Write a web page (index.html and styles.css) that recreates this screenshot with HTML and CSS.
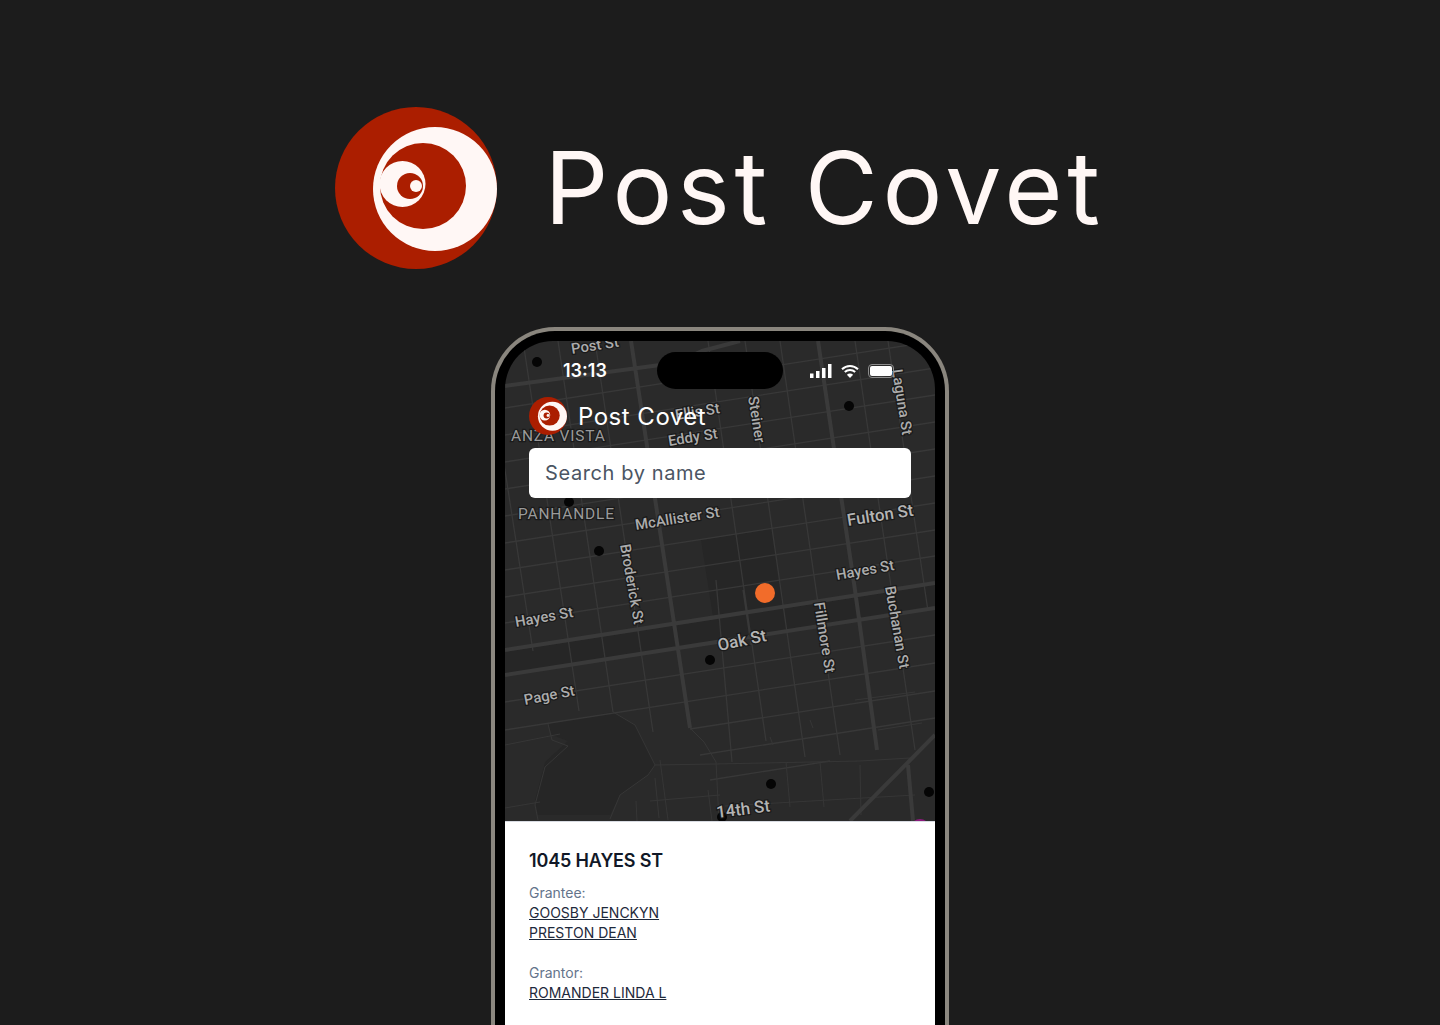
FILE: index.html
```html
<!DOCTYPE html>
<html lang="en">
<head>
<meta charset="utf-8">
<title>Post Covet</title>
<link rel="stylesheet" href="styles.css">
</head>
<body>
<svg class="defs" width="0" height="0" aria-hidden="true">
  <symbol id="logo" viewBox="335 107 162 162">
    <circle cx="416" cy="188" r="81" fill="#ab1e00"/>
    <circle cx="435" cy="189" r="62" fill="#fff7f5"/>
    <circle cx="423" cy="186" r="43" fill="#ab1e00"/>
    <circle cx="402.500" cy="184" r="23" fill="#fff7f5"/>
    <circle cx="410" cy="186" r="13" fill="#ab1e00"/>
    <circle cx="416" cy="186" r="6" fill="#fff7f5"/>
  </symbol>
</svg>
<main class="page">
  <header class="brand">
    <svg class="brand-logo"><use href="#logo"/></svg>
    <h1 class="brand-name">Post Covet</h1>
  </header>
  <section class="phone">
    <div class="screen">
      <div class="map-area">
        <svg class="map" viewBox="505 341 430 480">
          <rect x="505" y="341" width="430" height="480" fill="#2a2a2a"/>
          <path class="block" d="M701 540l71-11 13 83-71 11zM505 652l430-67 0 23-430 67zM548 724l65-12 22 13 20 40-7 10-28 20-10 20-72 0-3-15 10-38 23-21-16-6z"/>
          <path class="minor" d="M505 408l430-67M505 435l430-67M505 462l430-67M505 489l430-67M505 516l430-67M505 543l430-67M505 570l430-67M505 597l430-67M505 623l430-67M505 702l430-67M505 730l430-67M690 729l245-38M700 755l235-37M710 780l120-19"/>
          <path class="minor" d="M523 341l56 370M558 341l55 371M595 341l58 391M708 341l58 400M745 341l60 416M780 341l60 414M855 341l60 409M888 341l40 270M485 341l48 310M716 580l16 182M743 590l8 55"/>
          <path class="thin" d="M613 712l22 13 20 40-7 10-28 20-10 24M548 724l4 16 16 6-23 21-10 38 3 15M690 728l14 14 12 20 3 59M655 765l60-1 145-3 50-3M505 745l55-11M505 808l35-6M655 778l4 40M708 790l4 31M786 762l4 45M820 762l4 45M860 765l1 50M855 700l60-8M770 737l3 8M650 801l70-6M725 806l190-11M878 730l44-7M810 720l3 8M660 760l8 60M636 801l1 20"/>
          <path class="major" d="M505 386L660 365Q680 362 702 351L740 341M505 650L935 583M505 675L935 608M631 341L690 728M818 341L855 590L877 750"/>
          <path class="major" d="M850 821L935 735M908 765L913 821"/>
          <circle class="pin" cx="537" cy="362" r="5"/>
          <circle class="pin" cx="849" cy="406" r="5"/>
          <circle class="pin" cx="569" cy="502" r="5"/>
          <circle class="pin" cx="599" cy="551" r="5"/>
          <circle class="pin" cx="710" cy="660" r="5"/>
          <circle class="pin" cx="771" cy="784" r="5"/>
          <circle class="pin" cx="929" cy="792" r="5"/>
          <circle class="pin" cx="722" cy="817" r="5"/>
          <circle cx="920" cy="829" r="10" fill="#8b1a7c"/>
          <circle cx="765" cy="593" r="10" fill="#f26c2a"/>
          <g class="labels">
            <text transform="translate(572 354) rotate(-9)">Post St</text>
            <text class="wide" x="511" y="441">ANZA VISTA</text>
            <text transform="translate(676 420) rotate(-9)">Ellis St</text>
            <text transform="translate(669 446) rotate(-9)">Eddy St</text>
            <text transform="translate(748 397) rotate(81)">Steiner</text>
            <text transform="translate(892 370) rotate(81)">Laguna St</text>
            <text class="wide" x="518" y="519">PANHANDLE</text>
            <text transform="translate(636 530) rotate(-9)">McAllister St</text>
            <text class="big" transform="translate(848 526) rotate(-9)">Fulton St</text>
            <text transform="translate(837 580) rotate(-10)">Hayes St</text>
            <text transform="translate(620 545) rotate(80)">Broderick St</text>
            <text transform="translate(516 627) rotate(-10)">Hayes St</text>
            <text class="big" transform="translate(719 651) rotate(-12)">Oak St</text>
            <text transform="translate(814 603) rotate(81)">Fillmore St</text>
            <text transform="translate(885 587) rotate(80)">Buchanan St</text>
            <text transform="translate(525 705) rotate(-11)">Page St</text>
            <text class="big" transform="translate(717 818) rotate(-7)">14th St</text>
          </g>
        </svg>
        <div class="status">
          <span class="time">13:13</span>
          <span class="island"></span>
          <span class="indicators">
            <svg class="ind-signal" viewBox="0 0 22 14"><path fill="#fff" d="M0 9.500h3.500V14H0zM6 7h3.500v7H6zM12 4h3.500v10H12zM18 0h3.500v14H18z"/></svg>
            <svg class="ind-wifi" viewBox="0 0 18 14"><path fill="none" stroke="#fff" stroke-width="2" d="M1 5.200C5.500.8 12.500.8 17 5.200M3.800 8C6.800 5.200 11.200 5.200 14.200 8"/><path fill="#fff" d="M9 14L5.900 10.700C7.700 9.100 10.300 9.100 12.100 10.700z"/></svg>
            <svg class="ind-battery" viewBox="0 0 27 14"><rect x=".5" y=".5" width="25" height="13" rx="3.500" fill="none" stroke="#8d8d8d"/><rect x="2" y="2" width="22" height="10" rx="2" fill="#fff"/></svg>
          </span>
        </div>
        <div class="app-head">
          <svg class="app-logo"><use href="#logo"/></svg>
          <span class="app-name">Post Covet</span>
        </div>
        <div class="search">Search by name</div>
      </div>
      <article class="card">
        <h2 class="address">1045 HAYES ST</h2>
        <div class="party">
          <div class="party-label">Grantee:</div>
          <a class="party-name" href="#">GOOSBY JENCKYN</a>
          <a class="party-name" href="#">PRESTON DEAN</a>
        </div>
        <div class="party">
          <div class="party-label">Grantor:</div>
          <a class="party-name" href="#">ROMANDER LINDA L</a>
        </div>
      </article>
    </div>
  </section>
</main>
</body>
</html>
```

FILE: styles.css
```css
* { box-sizing: border-box; }
html, body { margin: 0; height: 100%; }
body {
  background: #1c1c1c;
  overflow: hidden;
  font-family: Inter, "Liberation Sans", sans-serif;
}
.defs { position: absolute; }
.page { display: flex; flex-direction: column; align-items: center; padding-top: 107px; height: 100%; }
.brand { display: flex; align-items: center; gap: 47px; height: 162px; }
.brand-logo { width: 162px; height: 162px; flex: none; }
.brand-name {
  margin: -1px 0 0;
  font-family: Inter, sans-serif;
  font-weight: 400;
  font-size: 100px;
  letter-spacing: 4.700px;
  color: #fff7f5;
  white-space: nowrap;
}
.phone {
  width: 458px;
  margin-top: 58px;
  padding: 4px 4px 0;
  height: 698px;
  border-radius: 64px 64px 0 0;
  background: #8a867e;
  flex: none;
}
.screen {
  background: #000;
  height: 100%;
  border-radius: 60px 60px 0 0;
  padding: 10px 10px 0;
  display: flex;
  flex-direction: column;
}
.map-area {
  position: relative;
  height: 480px;
  flex: none;
  border-radius: 48px 48px 0 0;
  overflow: hidden;
  padding: 11px 24px 0;
}
.map { position: absolute; inset: 0; width: 430px; height: 480px; }
.block { fill: #262626; }
.minor { fill: none; stroke: #383838; stroke-width: 1.300; }
.thin { fill: none; stroke: #363636; stroke-width: 1; }
.major { fill: none; stroke: #3a3a3a; stroke-width: 4; }
.pin { fill: #050505; }
.labels text {
  font-family: Roboto, sans-serif;
  font-size: 14.800px;
  font-weight: 500;
  fill: #acacac;
  stroke: #1a1a1a;
  stroke-width: 2.500px;
  paint-order: stroke;
}
.labels .big { font-size: 16.800px; fill: #b4b4b4; }
.labels .wide { font-size: 15.500px; font-weight: 400; letter-spacing: .8px; fill: #9a9a9a; }
.status { position: relative; display: flex; align-items: center; height: 37px; }
.time { width: 128px; padding-left: 34px; font-size: 18px; font-weight: 600; color: #fff; }
.island { width: 126px; height: 37px; border-radius: 19px; background: #000; flex: none; }
.indicators { display: flex; align-items: center; gap: 9px; margin-left: 27px; height: 14px; }
.ind-signal { width: 22px; height: 14px; }
.ind-wifi { width: 18px; height: 14px; }
.ind-battery { width: 27px; height: 14px; }
.app-head { position: relative; display: flex; align-items: center; gap: 11px; height: 38px; margin-top: 8px; }
.app-logo { width: 38px; height: 38px; flex: none; }
.app-name { font-size: 24px; font-weight: 400; letter-spacing: .5px; color: #fff; }
.search {
  position: relative;
  width: 382px;
  height: 50px;
  margin-top: 13px;
  padding-left: 16px;
  display: flex;
  align-items: center;
  background: #fff;
  border-radius: 6px;
  font-size: 20px;
  font-weight: 400;
  letter-spacing: .6px;
  color: #4b5563;
}
.card {
  flex: 1;
  background: #fff;
  border-top: 1px solid #d8dbe2;
  padding: 27px 24px 0;
}
.address { margin: 0 0 10px; font-size: 18px; font-weight: 600; letter-spacing: -.15px; line-height: 24px; color: #111827; }
.party { margin-bottom: 20px; font-size: 14px; line-height: 20px; }
.party-label { color: #64748b; }
.party-name { display: block; color: #1e293b; text-decoration: underline; }
```
